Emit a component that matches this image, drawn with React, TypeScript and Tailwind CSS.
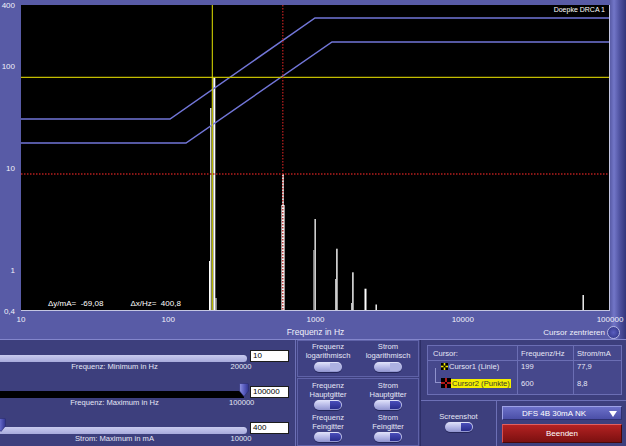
import React from 'react'

// Log-Skalen des Diagramms (Plot beginnt bei x=21, 4 Dekaden / 3 Dekaden)
const logX = (f: number) => 21 + (Math.log10(f) - 1) * 147.25
const logY = (v: number) => (Math.log10(400) - Math.log10(v)) * 102

const yTicks: [string, number][] = [
  ['400', 400],
  ['100', 100],
  ['10', 10],
  ['1', 1],
  ['0,4', 0.4],
]
const xTicks = [10, 100, 1000, 10000, 100000]

// Spektrallinien: x, oberes Ende, Breite, Farbe (Plot-Koordinaten)
const bars: [number, number, number, string][] = [
  [189, 103, 1.5, '#d6d6d6'],
  [192.3, 72, 2, '#ffffff'],
  [188, 256, 1, '#ffffff'],
  [194.5, 293, 1, '#ffffff'],
  [260.3, 200, 3.4, '#ded4d4'],
  [261.2, 169, 1.6, '#ffffff'],
  [293.5, 214, 1.3, '#ffffff'],
  [292.4, 245, 1, '#d0d0d0'],
  [315.2, 243.7, 1.4, '#ffffff'],
  [314.1, 274, 1, '#d0d0d0'],
  [331.2, 267.3, 1.4, '#ffffff'],
  [330.1, 298, 1, '#d0d0d0'],
  [343.5, 283.7, 2, '#ffffff'],
  [354.5, 299.5, 1.4, '#ffffff'],
  [561.5, 290, 1.4, '#ffffff'],
]

function Toggle({ on }: { on: boolean }) {
  return (
    <div className="relative h-[10px] w-[28px] rounded-full bg-linear-to-b from-[#e2e4fa] via-[#b8bbe8] to-[#9094cf] shadow-[0_1px_0_#25275a]">
      <div
        className={`absolute right-[1px] top-[1px] h-[8px] w-[11px] rounded-l-[3px] rounded-r-full ${
          on ? 'bg-linear-to-b from-[#4a4eba] to-[#282b8c]' : 'bg-[#aeb2e2]'
        }`}
      />
    </div>
  )
}

function Thumb({ className }: { className: string }) {
  return (
    <svg width="10" height="14" viewBox="0 0 10 14" className={`absolute ${className}`}>
      <defs>
        <linearGradient id="th" x1="0" x2="1" y1="0" y2="0">
          <stop offset="0" stopColor="#8f93e2" />
          <stop offset="0.5" stopColor="#5a5ec0" />
          <stop offset="1" stopColor="#30338e" />
        </linearGradient>
      </defs>
      <path d="M0.5 1.5 Q0.5 0.5 1.5 0.5 H8.5 Q9.5 0.5 9.5 1.5 V8 L5 13.5 L0.5 8 Z" fill="url(#th)" stroke="#2a2c70" strokeWidth="0.6" />
    </svg>
  )
}

function SliderRow({
  value,
  label,
  max,
  dark,
  thumb,
}: {
  value: string
  label: string
  max: string
  dark?: boolean
  thumb?: 'start' | 'end'
}) {
  return (
    <div>
      <div className="flex h-[12px] items-end">
        <div className="relative h-[7px] w-[248px]">
          {dark ? (
            <div className="h-full w-[244px] bg-black" />
          ) : (
            <div className="h-full w-[247px] rounded-r-full bg-linear-to-b from-[#c9cbef] to-[#a8abdc]" />
          )}
          {thumb === 'end' && <Thumb className="left-[239px] top-[-8px]" />}
          {thumb === 'start' && <Thumb className="left-[-4px] top-[-9px]" />}
        </div>
        <div className="ml-[2px] h-[12px] w-[39px] border border-[#1c1c1c] bg-white pl-[2px] text-[8px] leading-[10px] text-black">
          {value}
        </div>
      </div>
      <div className="flex h-[9px] items-center text-[7.6px] leading-[9px] text-[#e6e7f6]">
        <div className="w-[229px] text-center">{label}</div>
        <div className="w-[24px] text-center">{max}</div>
      </div>
    </div>
  )
}

function CursorIcon({ color, size }: { color: string; size: number }) {
  const c = size / 2
  return (
    <svg width={size} height={size} viewBox={`0 0 ${size} ${size}`}>
      <rect width={size} height={size} fill="#000" />
      <line x1={c} y1="0" x2={c} y2={c - 1} stroke={color} strokeWidth="1.6" />
      <line x1={c} y1={c + 1} x2={c} y2={size} stroke={color} strokeWidth="1.6" />
      <line x1="0" y1={c} x2={c - 1} y2={c} stroke={color} strokeWidth="1.6" />
      <line x1={c + 1} y1={c} x2={size} y2={c} stroke={color} strokeWidth="1.6" />
    </svg>
  )
}

function App() {
  return (
    <div className="h-[446px] w-[626px] overflow-hidden bg-[#585ba6] font-['Liberation_Sans',Arial,sans-serif] text-[#f0f0fa]">
      {/* Diagramm */}
      <div className="flex h-[339px] flex-col bg-[linear-gradient(to_right,#585ba6_610px,#7276c8_614px,#4d509e_620px,#33357a_626px)] pt-[5px]">
        <div className="flex">
          <div className="relative h-[306px] w-[21px]">
            {yTicks.map(([label, v]) => (
              <span
                key={label}
                className="absolute right-[6px] -translate-y-1/2 text-[8px] leading-[9px]"
                style={{ top: logY(v) }}
              >
                {label}
              </span>
            ))}
          </div>
          <div className="relative h-[306px] w-[589px] border-b border-r border-[#c4c6e2] bg-black">
            <svg width="588" height="305" className="block">
              {bars.map(([x, y, w, c], i) => (
                <rect key={i} x={x} y={y} width={w} height={305 - y} fill={c} />
              ))}
              <polyline points="0,114 149,114 294,13 589,13" fill="none" stroke="#7276d8" strokeWidth="1.5" />
              <polyline points="0,138 165,138 311,37 589,37" fill="none" stroke="#7276d8" strokeWidth="1.5" />
              <line x1="0" y1="72.3" x2="589" y2="72.3" stroke="#c2bc00" strokeWidth="1.3" />
              <line x1="191.3" y1="0" x2="191.3" y2="305" stroke="#e4e400" strokeWidth="1" />
              <line x1="261.8" y1="0" x2="261.8" y2="305" stroke="#b41e1e" strokeWidth="1.3" strokeDasharray="1.5 1.5" />
              <line x1="0" y1="169" x2="589" y2="169" stroke="#b41e1e" strokeWidth="1.5" strokeDasharray="1.5 1.5" />
            </svg>
            <span className="absolute right-[4px] top-[1px] text-[7px] leading-[8px] text-white">Doepke DRCA 1</span>
            <div className="absolute bottom-[2px] left-[27px] flex gap-[27px] text-[8px] leading-[9px] text-white">
              <span>Δy/mA= &nbsp;-69,08</span>
              <span>Δx/Hz= &nbsp;400,8</span>
            </div>
          </div>
        </div>
        <div className="relative h-[14px]">
          {xTicks.map((f) => (
            <span
              key={f}
              className="absolute top-[4px] -translate-x-1/2 text-[8px] leading-[9px]"
              style={{ left: logX(f) }}
            >
              {f}
            </span>
          ))}
        </div>
        <div className="grid h-[14px] items-center">
          <div className="col-start-1 row-start-1 w-[610px] pl-[21px] text-center text-[8.5px] leading-[10px]">
            Frequenz in Hz
          </div>
          <div className="col-start-1 row-start-1 flex items-center gap-[2px] justify-self-end pr-[6px] text-[8px] leading-[9px]">
            <span>Cursor zentrieren</span>
            <div className="h-[13px] w-[13px] rounded-full border border-[#b4b7e4] bg-radial from-[#5a5ec0] to-[#2c2f80]" />
          </div>
        </div>
      </div>

      {/* Bedienfeld */}
      <div className="flex h-[107px] border-t border-[#8386cc] bg-[#3d3f7d]">
        <div className="flex w-[296px] flex-col gap-[15px] border-r border-[#6d70b6] pt-[10px]">
          <SliderRow value="10" label="Frequenz: Minimum in Hz" max="20000" />
          <SliderRow value="100000" label="Frequenz: Maximum in Hz" max="100000" dark thumb="end" />
          <SliderRow value="400" label="Strom: Maximum in mA" max="10000" thumb="start" />
        </div>

        <div className="flex w-[124px] flex-col gap-[1px] px-[1px] text-[7.6px] leading-[9px] text-[#e6e7f6]">
          <div className="grid h-[37px] grid-cols-2 border border-[#5f62a8] bg-[#3f4183] pt-[1px]">
            {['Frequenz', 'Strom'].map((t) => (
              <div key={t} className="flex flex-col items-center">
                <span>{t}</span>
                <span>logarithmisch</span>
                <div className="mt-[1.5px]">
                  <Toggle on={false} />
                </div>
              </div>
            ))}
          </div>
          <div className="grid flex-1 grid-cols-2 border border-[#5f62a8] bg-[#3f4183] pt-[2px]">
            {['Frequenz', 'Strom'].map((t) => (
              <div key={t} className="flex flex-col items-center">
                <span>{t}</span>
                <span>Hauptgitter</span>
                <div className="mt-[1px]">
                  <Toggle on />
                </div>
                <span className="mt-[3px]">{t}</span>
                <span>Feingitter</span>
                <div className="mt-[1px]">
                  <Toggle on />
                </div>
              </div>
            ))}
          </div>
        </div>

        <div className="flex flex-1 flex-col border-l border-[#2c2e66] text-[7.6px] leading-[9px] text-[#e6e7f6]">
          <div className="h-[61px] border-b border-[#6d70b6] pl-[6px] pr-[4px] pt-[5px]">
            <div className="flex border border-[#6b6eb4] bg-[#46488c]">
              <div className="w-[90px] border-r border-[#6b6eb4]">
                <div className="flex h-[15px] items-center border-b border-[#6b6eb4] pl-[5px]">Cursor:</div>
                <div className="flex h-[11px] items-center gap-[1px] pl-[13px]">
                  <CursorIcon color="#f2e800" size={7} />
                  <span>Cursor1 (Linie)</span>
                </div>
                <div className="relative flex h-[22px] items-center pl-[13px]">
                  <div className="absolute left-[7px] top-[-4px] h-[15px] w-[6px] border-b border-l border-[#8f92cc]" />
                  <CursorIcon color="#e02020" size={10} />
                  <span className="bg-[#f4ef00] px-[1px] text-[#3a3a2a]">Cursor2 (Punkte)</span>
                </div>
              </div>
              <div className="w-[56px] border-r border-[#6b6eb4]">
                <div className="flex h-[15px] items-center border-b border-[#6b6eb4] pl-[3px]">Frequenz/Hz</div>
                <div className="flex h-[11px] items-center pl-[3px]">199</div>
                <div className="flex h-[22px] items-center pl-[3px]">600</div>
              </div>
              <div className="flex-1">
                <div className="flex h-[15px] items-center border-b border-[#6b6eb4] pl-[3px]">Strom/mA</div>
                <div className="flex h-[11px] items-center pl-[3px]">77,9</div>
                <div className="flex h-[22px] items-center pl-[3px]">8,8</div>
              </div>
            </div>
          </div>
          <div className="flex flex-1">
            <div className="flex w-[76px] flex-col items-center border-r border-[#6d70b6] pt-[11px]">
              <span>Screenshot</span>
              <div className="mt-[1px]">
                <Toggle on />
              </div>
            </div>
            <div className="flex flex-1 flex-col pl-[5px] pr-[4px] pt-[5px]">
              <div className="relative flex h-[14px] items-center justify-center border-l border-t border-b border-r border-b-[#2e3070] border-l-[#9ea2e6] border-r-[#2e3070] border-t-[#9ea2e6] bg-linear-to-b from-[#6c70c8] to-[#4b4fa8] pr-[16px] text-[8px] text-white">
                DFS 4B 30mA NK
                <svg width="8" height="6" viewBox="0 0 8 6" className="absolute right-[4px] top-[4px]">
                  <path d="M0 0 H8 L4 6 Z" fill="#ffffff" />
                </svg>
              </div>
              <div className="mt-[4px] flex h-[19px] items-center justify-center border border-b-[#4a0808] border-l-[#d85050] border-r-[#4a0808] border-t-[#e06060] bg-linear-to-b from-[#b42222] to-[#7c1010] text-[8px] text-white">
                Beenden
              </div>
            </div>
          </div>
        </div>
      </div>
    </div>
  )
}

export default App
